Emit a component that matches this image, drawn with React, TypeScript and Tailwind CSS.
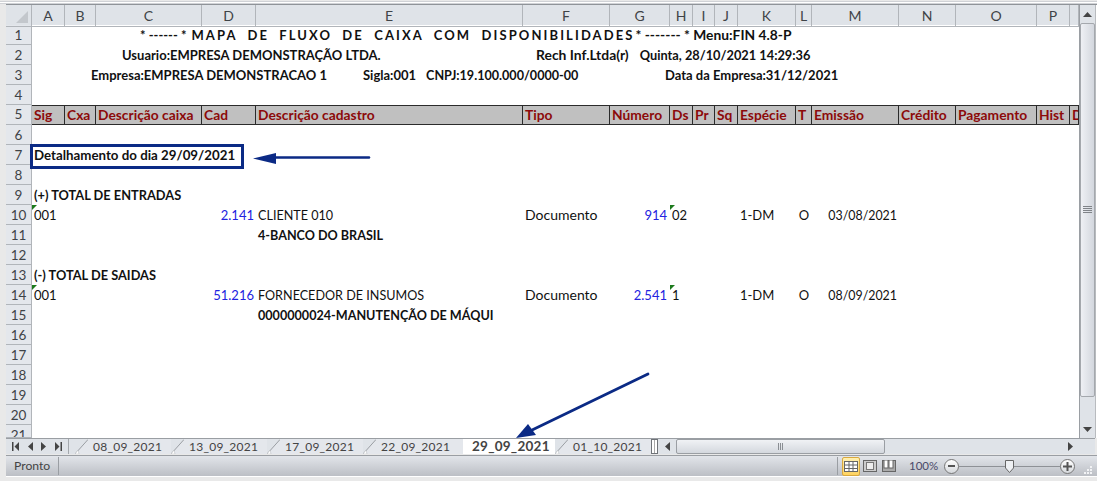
import React from 'react';

const gridCols =
  'grid grid-cols-[26px_33px_31px_106px_54px_267px_87px_60px_23px_22px_23px_58px_16px_87px_57px_81px_33px_9px]';

const columns = ['A', 'B', 'C', 'D', 'E', 'F', 'G', 'H', 'I', 'J', 'K', 'L', 'M', 'N', 'O', 'P', ''];
const titles = [
  'Sig', 'Cxa', 'Descrição caixa', 'Cad', 'Descrição cadastro', 'Tipo', 'Número', 'Ds', 'Pr', 'Sq',
  'Espécie', 'T', 'Emissão', 'Crédito', 'Pagamento', 'Hist', 'D',
];

const RowNo = ({ n, short }: { n: number; short?: boolean }) => (
  <div
    className={`flex ${short ? 'h-[13px] items-start' : 'h-5 items-center'} justify-center overflow-hidden border-r border-b border-[#b1b5ba] bg-[#e4e7ec] text-[13.5px] font-normal text-[#3f4347]`}
  >
    {n}
  </div>
);

const Row = ({ n, children }: { n: number; children?: React.ReactNode }) => (
  <div className={`${gridCols} h-5 whitespace-nowrap bg-white text-[13px] leading-5 text-[#111]`}>
    <RowNo n={n} />
    {children}
  </div>
);

const Flag = () => (
  <span className="absolute top-0 left-0 h-0 w-0 border-t-[5px] border-r-[5px] border-t-[#1c7a1c] border-r-transparent" />
);

const DataRow = ({
  n, cad, nome, doc, ds, emissao,
}: { n: number; cad: string; nome: string; doc: string; ds: string; emissao: string }) => (
  <Row n={n}>
    <div className="relative col-span-2 pl-[2px]">
      <Flag />
      001
    </div>
    <div />
    <div className="pr-[2px] text-right text-[#2222e0]">{cad}</div>
    <div className="pt-[1px] pl-[2px] text-[12.6px]">{nome}</div>
    <div className="pl-[2px] text-[14px]">Documento</div>
    <div className="pr-[3px] text-right text-[#2222e0]">{doc}</div>
    <div className="relative col-span-3 pl-[2px]">
      <Flag />
      {ds}
    </div>
    <div className="pl-[2px] text-[13px]">1-DM</div>
    <div className="text-center">O</div>
    <div className="pt-[1px] pr-[2px] text-right text-[12.4px]">{emissao}</div>
  </Row>
);

const BoldE = ({ n, text }: { n: number; text: string }) => (
  <Row n={n}>
    <div className="col-span-4" />
    <div className="pt-[1px] pl-[2px] text-[12.6px] font-bold">{text}</div>
  </Row>
);

const Tab = ({ label, w }: { label: string; w: string }) => (
  <div className={`relative flex h-[15px] items-center bg-[#e4e7ec] pl-[5px] text-[12px] tracking-[0.25px] text-[#444] ${w}`}>
    <svg className="absolute top-0 -left-[13px] h-[15px] w-[13px]" viewBox="0 0 13 15">
      <path d="M0 15 L13 0.5 V15 Z" fill="#e4e7ec" />
      <path d="M0 15 L13 0.5" stroke="#9a9ea3" fill="none" />
      <path d="M0 15 L3 11 L4 15 Z" fill="#fff" stroke="#b5b8bc" strokeWidth="0.5" />
    </svg>
    {label}
  </div>
);

const Arrow = ({ d }: { d: string }) => <path d={d} fill="#444" />;

export default function App() {
  return (
    <div className="relative flex h-[481px] w-[1097px] flex-col overflow-hidden bg-[#e9e9e9] pt-[1px] font-['Lato','Liberation_Sans',sans-serif]">
      <div className="h-[3px] border-y border-[#d0d2d6] bg-white" />
      <div className="ml-[6px] flex h-[434px] w-[1091px] border-t border-[#8f9398]">
        {/* sheet */}
        <div className="w-[1073px] overflow-hidden">
          <div className={`${gridCols} h-5 bg-[#dfe3e8] text-[14px] text-[#3f4347]`}>
            <div className="relative border-r border-b border-[#b1b5ba]">
              <span className="absolute right-[3px] bottom-[3px] h-0 w-0 border-b-[12px] border-l-[12px] border-b-[#c3c7cc] border-l-transparent" />
            </div>
            {columns.map((c, i) => (
              <div key={i} className="flex items-center justify-center border-r border-b border-[#b1b5ba]">
                {c}
              </div>
            ))}
          </div>

          <Row n={1}>
            <div className="col-span-17 flex pl-[108px] font-bold">
              <span>* ------ *</span>
              <span className="ml-[5px] w-[444px] tracking-[2.1px] [word-spacing:5px]">
                MAPA DE FLUXO DE CAIXA COM DISPONIBILIDADES
              </span>
              <span className="text-[13.8px]">* ------- * Menu:FIN 4.8-P</span>
            </div>
          </Row>
          <Row n={2}>
            <div className="col-span-5 pl-[90px] font-bold">Usuario:EMPRESA DEMONSTRAÇÃO LTDA.</div>
            <div className="col-span-12 pl-[13px] text-[13.9px] font-bold">
              Rech Inf.Ltda(r)<span className="ml-[11px] text-[12.8px]">Quinta, 28/10/2021 14:29:36</span>
            </div>
          </Row>
          <Row n={3}>
            <div className="col-span-4 pl-[59px] font-bold">Empresa:EMPRESA DEMONSTRACAO 1</div>
            <div className="col-span-2 pl-[107px] font-bold">
              Sigla:001<span className="ml-[10px] text-[12.6px]">CNPJ:19.100.000/0000-00</span>
            </div>
            <div className="col-span-11 pl-[55px] font-bold">Data da Empresa:31/12/2021</div>
          </Row>
          <Row n={4} />

          <div className={`${gridCols} h-5 text-[13.8px] font-bold text-[#8c0a0a]`}>
            <RowNo n={5} />
            {titles.map((t, i) => (
              <div
                key={i}
                className="overflow-hidden border-y border-r border-[#2b2b2b] bg-[#c0c0c0] pl-[2px] leading-[18px] whitespace-nowrap"
              >
                {t}
              </div>
            ))}
          </div>

          <Row n={6} />
          <Row n={7}>
            <div className="col-span-6 pl-[2px] text-[13.3px] font-bold">Detalhamento do dia 29/09/2021</div>
          </Row>
          <Row n={8} />
          <Row n={9}>
            <div className="col-span-6 pl-[2px] text-[12.8px] font-bold">(+) TOTAL DE ENTRADAS</div>
          </Row>
          <DataRow n={10} cad="2.141" nome="CLIENTE 010" doc="914" ds="02" emissao="03/08/2021" />
          <BoldE n={11} text="4-BANCO DO BRASIL" />
          <Row n={12} />
          <Row n={13}>
            <div className="col-span-6 pl-[2px] text-[12.8px] font-bold">(-) TOTAL DE SAIDAS</div>
          </Row>
          <DataRow n={14} cad="51.216" nome="FORNECEDOR DE INSUMOS" doc="2.541" ds="1" emissao="08/09/2021" />
          <BoldE n={15} text="0000000024-MANUTENÇÃO DE MÁQUI" />
          {[16, 17, 18, 19, 20].map((n) => (
            <Row key={n} n={n} />
          ))}
          <div className={`${gridCols} h-[13px] overflow-hidden bg-white`}>
            <RowNo n={21} short />
          </div>
        </div>

        {/* vertical scrollbar */}
        <div className="flex w-[16px] flex-col border-l border-[#9a9ea3] bg-[#dfe3e8]">
          <div className="flex h-[18px] items-center justify-center">
            <svg width="9" height="5" viewBox="0 0 9 5"><Arrow d="M4.5 0 L9 5 H0 Z" /></svg>
          </div>
          <div className="flex h-[374px] items-center justify-center rounded-[2px] border border-[#a4a8ad] bg-gradient-to-r from-[#eef0f4] to-[#d3d7de]">
            <svg width="9" height="8" viewBox="0 0 9 8">
              <path d="M0 .5H9M0 2.5H9M0 4.5H9M0 6.5H9" stroke="#7f8388" />
            </svg>
          </div>
          <div className="flex flex-1 items-end justify-center pb-[6px]">
            <svg width="9" height="5" viewBox="0 0 9 5"><Arrow d="M0 0 H9 L4.5 5 Z" /></svg>
          </div>
        </div>
        <div className="w-[2px] border-l border-[#b8bbbf] bg-white" />
      </div>

      {/* sheet tabs + horizontal scrollbar */}
      <div className="ml-[6px] flex h-[16px] w-[1089px] items-stretch border-t border-[#9a9ea3] bg-[#dfe3e8]">
        <div className="flex w-[63px] items-center border-r border-[#a4a8ad] pl-[6px]">
          <svg width="7" height="9" viewBox="0 0 7 9"><Arrow d="M0 0H1.5V9H0ZM7 0V9L2.5 4.5Z" /></svg>
          <svg width="5" height="9" viewBox="0 0 5 9" className="ml-[9px]"><Arrow d="M5 0V9L0 4.5Z" /></svg>
          <svg width="5" height="9" viewBox="0 0 5 9" className="ml-[8px]"><Arrow d="M0 0V9L5 4.5Z" /></svg>
          <svg width="7" height="9" viewBox="0 0 7 9" className="ml-[9px]"><Arrow d="M7 0H5.5V9H7ZM0 0V9L4.5 4.5Z" /></svg>
        </div>
        <div className="ml-[19px] flex">
          <Tab label="08_09_2021" w="w-[83px] mr-[13px]" />
          <Tab label="13_09_2021" w="w-[83px] mr-[13px]" />
          <Tab label="17_09_2021" w="w-[83px] mr-[13px]" />
          <Tab label="22_09_2021" w="w-[87px]" />
          <div className="flex h-[15px] w-[92px] items-center bg-white pl-[9px] text-[13.5px] font-bold tracking-[0.25px] text-[#444]">
            29_09_2021
          </div>
          <Tab label="01_10_2021" w="w-[83px] ml-[13px]" />
        </div>
        <div className="flex w-[7px] justify-center border border-[#6f7378] bg-white">
          <span className="w-[1px] bg-[#aaa]" />
        </div>
        <div className="flex w-[18px] items-center justify-center">
          <svg width="5" height="9" viewBox="0 0 5 9"><Arrow d="M5 0 V9 L0 4.5 Z" /></svg>
        </div>
        <div className="flex w-[209px] items-center justify-center rounded-[2px] border border-[#9a9ea3] bg-gradient-to-b from-[#f0f2f5] to-[#d4d8de]">
          <svg width="5" height="7" viewBox="0 0 5 7" className="shrink-0">
            <path d="M.5 0V7M2.5 0V7M4.5 0V7" stroke="#8a8e93" />
          </svg>
        </div>
        <div className="flex flex-1 items-center justify-end pr-[22px]">
          <svg width="5" height="9" viewBox="0 0 5 9"><Arrow d="M0 0 V9 L5 4.5 Z" /></svg>
        </div>
      </div>

      {/* status bar */}
      <div className="mt-[1px] ml-[6px] flex h-[21px] w-[1091px] items-center border-t border-[#9a9ea3] bg-gradient-to-b from-[#e2e5ea] to-[#bcbfc5] text-[12.2px] text-[#444]">
        <div className="flex h-[18px] w-[53px] items-center border-r border-[#9a9ea3] pl-[8px]">Pronto</div>
        <div className="flex-1" />
        <div className="h-[18px] border-l border-[#9a9ea3]" />
        <div className="ml-[4px] flex h-[19px] w-[18px] items-center justify-center rounded-[2px] border border-[#d9a93f] bg-gradient-to-b from-[#fff0b0] to-[#ffd35f]">
          <svg width="14" height="11" viewBox="0 0 14 11">
            <rect x=".5" y=".5" width="13" height="10" fill="#fff" stroke="#666" />
            <path d="M5 .5V10.5M9 .5V10.5M.5 4H13.5M.5 7.5H13.5" stroke="#666" />
          </svg>
        </div>
        <svg width="14" height="12" viewBox="0 0 14 12" className="ml-[3px]">
          <rect x=".5" y=".5" width="13" height="11" fill="#ccc" stroke="#666" />
          <rect x="3.5" y="2.5" width="7" height="7" fill="#eee" stroke="#777" />
        </svg>
        <svg width="14" height="12" viewBox="0 0 14 12" className="ml-[5px]">
          <rect x=".5" y=".5" width="13" height="11" fill="#aaa" stroke="#666" />
          <rect x="2" y="0" width="4" height="8" fill="#fff" stroke="#666" />
          <rect x="7" y="0" width="4" height="8" fill="#fff" stroke="#666" />
        </svg>
        <span className="ml-[12px] w-[28px] pl-[1px] text-[11.5px] text-[#4a4a6a]">100%</span>
        <div className="ml-[8px] flex h-[15px] w-[15px] items-center justify-center rounded-full border border-[#777] bg-gradient-to-b from-white to-[#d5d8dc]">
          <span className="h-[2px] w-[7px] bg-[#555]" />
        </div>
        <div className="relative h-[1px] w-[101px] bg-[#8e9196]">
          <svg width="9" height="13" viewBox="0 0 9 13" className="absolute -top-[6px] left-[46px]">
            <path d="M.5 .5H8.5V8L4.5 12.5L.5 8Z" fill="#eef0f3" stroke="#666" />
          </svg>
        </div>
        <div className="flex h-[15px] w-[15px] items-center justify-center rounded-full border border-[#777] bg-gradient-to-b from-white to-[#d5d8dc]">
          <svg width="9" height="9" viewBox="0 0 9 9"><path d="M3.5 0H5.5V3.5H9V5.5H5.5V9H3.5V5.5H0V3.5H3.5Z" fill="#555" /></svg>
        </div>
        <svg width="9" height="9" viewBox="0 0 9 9" className="mt-[9px] mr-[5px] ml-[8px]">
          <path d="M7 0h2v2H7zM4 3h2v2H4zM7 3h2v2H7zM1 6h2v2H1zM4 6h2v2H4zM7 6h2v2H7z" fill="#f2f3f5" />
        </svg>
      </div>
      <div className="ml-[6px] h-[1px] w-[1091px] bg-white" />

      {/* annotations drawn on top of the sheet */}
      <div className="absolute top-[144px] left-[30px] h-[25px] w-[214px] border-[3px] border-[#0b2a85]" />
      <svg className="pointer-events-none absolute top-0 left-0" width="1097" height="481" viewBox="0 0 1097 481">
        <path d="M270 157.5H369" stroke="#0b2a85" strokeWidth="2.5" strokeLinecap="round" />
        <path d="M253 158.5L276 153V164Z" fill="#0b2a85" />
        <path d="M648 374L530 431" stroke="#0b2a85" strokeWidth="2.8" strokeLinecap="round" />
        <path d="M516 438L528 424L536 435Z" fill="#0b2a85" />
      </svg>
    </div>
  );
}
